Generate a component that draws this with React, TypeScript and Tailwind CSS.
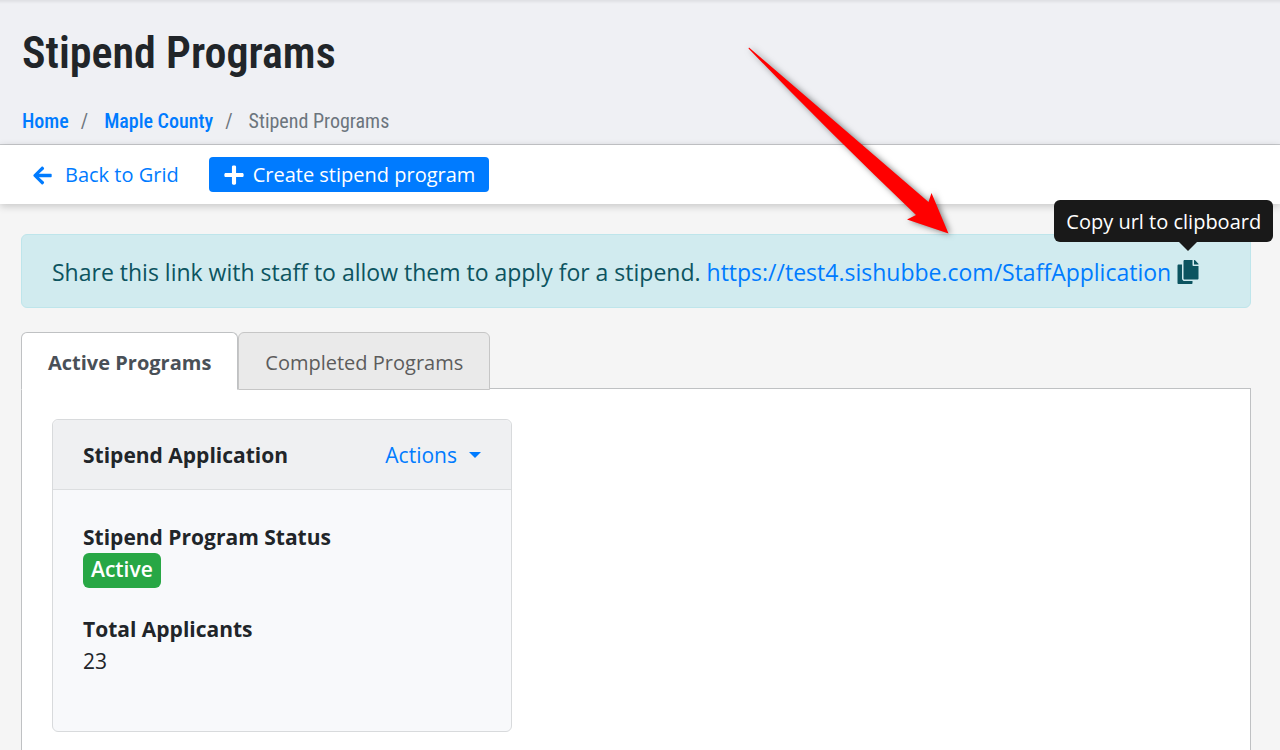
import { useState } from "react";
import { FaArrowLeft, FaCopy, FaPlus } from "react-icons/fa";

const SHARE_URL = "https://test4.sishubbe.com/StaffApplication";

function PageHeader() {
  return (
    <header className="border-b border-[#c8cacd] bg-[#eff0f4] px-[22px] pt-[25px] pb-[7px] font-['Roboto_Condensed','Roboto',sans-serif] shadow-[inset_0_5px_3px_-3px_rgba(0,0,0,0.07)]">
      <h1 className="text-[44px] leading-14 font-semibold text-[#212529]">Stipend Programs</h1>
      <nav aria-label="Breadcrumb" className="mt-6">
        <ol className="flex gap-3 text-[20px] leading-8 text-[#6c757d]">
          <li><a href="#home" className="font-medium text-[#007bff]">Home</a></li>
          <li aria-hidden="true">/</li>
          <li><a href="#county" className="ml-1 font-medium text-[#007bff]">Maple County</a></li>
          <li aria-hidden="true">/</li>
          <li aria-current="page" className="ml-1">Stipend Programs</li>
        </ol>
      </nav>
    </header>
  );
}

function Toolbar() {
  return (
    <div className="flex items-center gap-[30px] bg-white px-8 py-3 text-[20px] leading-[34px] shadow-[0_2px_8px_rgba(0,0,0,0.2)]">
      <a href="#grid" className="flex items-center gap-3 pt-px text-[#007bff]">
        <FaArrowLeft className="size-[21px]" />
        Back to Grid
      </a>
      <button type="button" className="flex items-center gap-2 rounded bg-[#007bff] px-[14px] pt-px text-white">
        <FaPlus className="size-[22px]" />
        Create stipend program
      </button>
    </div>
  );
}

function CopyButton() {
  return (
    <button
      type="button"
      aria-label="Copy url"
      aria-describedby="copy-tip"
      className="relative ml-1.5 text-[#0c5460]"
      onClick={() => navigator.clipboard?.writeText(SHARE_URL)}
    >
      <FaCopy className="h-6 w-[22px]" />
      <span className="absolute bottom-full left-1/2 mb-[9px] -translate-x-1/2 border-x-[9px] border-t-[9px] border-x-transparent border-t-[#191919]" />
      <span
        id="copy-tip"
        role="tooltip"
        className="absolute -right-[74px] bottom-full mb-[18px] rounded-md bg-[#191919] px-3 pt-1.5 pb-1 text-[20px] leading-8 whitespace-nowrap text-white"
      >
        Copy url to clipboard
      </span>
    </button>
  );
}

function ProgramCard() {
  return (
    <article className="w-[460px] rounded-md border border-[#d8dadc] bg-[#f8f9fb] text-[21px] leading-8 text-[#212529]">
      <div className="flex items-center justify-between rounded-t-md border-b border-[#dcdee0] bg-[#eff0f2] px-[30px] pt-[19px] pb-[18px]">
        <h2 className="font-bold">Stipend Application</h2>
        <button type="button" className="flex items-center gap-3 text-[#007bff]">
          Actions
          <span className="border-x-[6px] border-t-[6px] border-x-transparent border-t-[#007bff]" />
        </button>
      </div>
      <dl className="px-[30px] pt-[31px] pb-[54px]">
        <dt className="font-bold">Stipend Program Status</dt>
        <dd className="mb-[25px] flex">
          <span className="rounded-md bg-[#28a745] px-2 pb-[2px] leading-[33px] font-semibold text-white">Active</span>
        </dd>
        <dt className="font-bold">Total Applicants</dt>
        <dd>23</dd>
      </dl>
    </article>
  );
}

function PointerArrow() {
  return (
    <svg
      aria-hidden="true"
      viewBox="0 0 220 210"
      className="pointer-events-none absolute top-[38px] left-[740px] h-[210px] w-[220px]"
    >
      <path
        d="M9 9.5 L188.500 164 L191.500 155 L208.500 195.500 L167 181.500 L176 177 Q90 95 8.500 10.500Z"
        fill="#ff0000"
        className="drop-shadow-[2px_1px_3px_rgba(0,0,0,0.5)]"
      />
    </svg>
  );
}

export default function App() {
  const [tab, setTab] = useState("active");
  const selected = "border-[#bfc1c3] border-b-white bg-white font-bold text-[#495057]";
  const idle = "border-[#c6c6c6] bg-[#eaeaea] text-[#5c5c5c]";
  return (
    <div className="relative flex min-h-screen flex-col overflow-x-hidden bg-[#f5f5f5] font-['Open_Sans',sans-serif]">
      <PageHeader />
      <Toolbar />
      <main className="flex grow flex-col pr-[29px] pl-[21px]">
        <div className="mt-[30px] flex items-center rounded-md border border-[#bee5eb] bg-[#d1ebef] px-[30px] pt-[19px] pb-[17px] text-[23px] leading-9 text-[#0c5460]">
          <p className="whitespace-nowrap">
            Share this link with staff to allow them to apply for a stipend.{" "}
            <a href={SHARE_URL} className="text-[#007bff]">{SHARE_URL}</a>
          </p>
          <CopyButton />
        </div>
        <div role="tablist" className="relative z-10 mt-6 flex text-[20px] leading-9">
          <button
            type="button"
            role="tab"
            aria-selected={tab === "active"}
            onClick={() => setTab("active")}
            className={`rounded-t-md border px-[26px] pt-3 pb-2 ${tab === "active" ? selected : idle}`}
          >
            Active Programs
          </button>
          <button
            type="button"
            role="tab"
            aria-selected={tab === "completed"}
            onClick={() => setTab("completed")}
            className={`rounded-t-md border px-[26px] pt-3 pb-2 ${tab === "completed" ? selected : idle}`}
          >
            Completed Programs
          </button>
        </div>
        <section role="tabpanel" className="-mt-[2px] grow border border-b-0 border-[#bfc1c3] bg-white px-[30px] pt-[30px] pb-[18px]">
          {tab === "active" && <ProgramCard />}
        </section>
      </main>
      <PointerArrow />
    </div>
  );
}
